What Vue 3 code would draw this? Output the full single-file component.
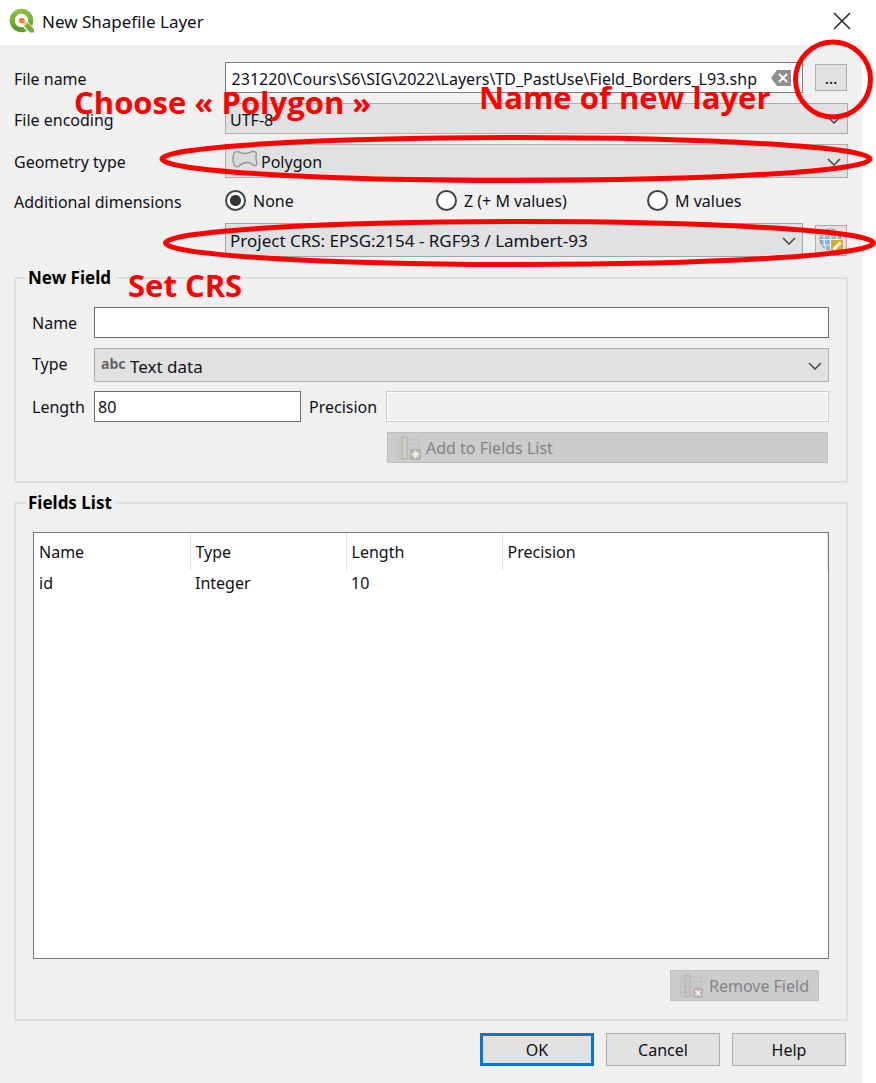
<script setup>
import { onMounted, ref } from 'vue'

const fileName = ref('231220\\Cours\\S6\\SIG\\2022\\Layers\\TD_PastUse\\Field_Borders_L93.shp')
const fileInput = ref(null)
const dimension = ref('none')
const dimensions = [
  { value: 'none', label: 'None' },
  { value: 'z', label: 'Z (+ M values)' },
  { value: 'm', label: 'M values' },
]
const fieldName = ref('')
const fieldLength = ref('80')
const fields = [{ name: 'id', type: 'Integer', length: '10', precision: '' }]

onMounted(() => {
  // Long paths show their end, where the file name is.
  fileInput.value.scrollLeft = fileInput.value.scrollWidth
})
</script>

<template>
  <div class="page">
    <header class="titlebar">
      <svg class="logo" viewBox="0 0 26 26" aria-hidden="true">
        <defs>
          <linearGradient id="ring" x1="0" y1="0" x2="0" y2="1">
            <stop offset="0" stop-color="#8fc043" />
            <stop offset="1" stop-color="#5f9a2c" />
          </linearGradient>
        </defs>
        <circle cx="12.500" cy="12.500" r="9.300" fill="none" stroke="url(#ring)" stroke-width="5" />
        <path d="M15 15 L24 24" stroke="#fff" stroke-width="7" />
        <path d="M15 18 L18.500 14.500 L25 21 V24.500 H21z" fill="#78ab35" />
        <path d="M13 11 L19 15 L15.500 18.500 L11 13z" fill="#dfcf8e" />
        <circle cx="12.700" cy="12.500" r="2.800" fill="#ef7f2c" />
      </svg>
      <h1>New Shapefile Layer</h1>
      <button class="close" type="button" aria-label="Close">
        <svg viewBox="0 0 18 18"><path d="M1 1 L17 17 M17 1 L1 17" /></svg>
      </button>
    </header>

    <form class="dialog" @submit.prevent>
      <div class="form">
        <label class="caption" for="file">File name</label>
        <div class="with-tool">
          <div class="file-box">
            <input id="file" ref="fileInput" v-model="fileName" type="text" />
            <button class="clear" type="button" aria-label="Clear">
              <svg viewBox="0 0 20 16">
                <path d="M6 0 H20 V16 H6 L0 8z" fill="#8f8f8f" />
                <path d="M8 4 L16 12 M16 4 L8 12" stroke="#fff" stroke-width="1.800" />
              </svg>
            </button>
          </div>
          <button class="tool browse" type="button">…</button>
        </div>

        <label class="caption" for="encoding">File encoding</label>
        <div class="select low">
          <select id="encoding"><option>UTF-8</option></select>
          <svg class="chevron" viewBox="0 0 14 8"><path d="M1 1 L7 7 L13 1" /></svg>
        </div>

        <label class="caption" for="geometry">Geometry type</label>
        <div class="select">
          <select id="geometry" class="has-icon"><option>Polygon</option></select>
          <svg class="lead polygon" viewBox="0 0 26 18" aria-hidden="true">
            <path
              d="M3 2 C6 0.500 8 3 12 3.500 C16 4 19 1 22 1.500 C26 2 23.500 6 24 9 C24.500 12 26 15 23 15.500 C20 16 19 12.500 16 12.500 C12 12.500 9 14 6.500 16.500 C3 18 1 14 1 10 C1 7 1 3.500 3 2z"
              fill="#dadada" stroke="#929292" stroke-width="1.300"
            />
          </svg>
          <svg class="chevron" viewBox="0 0 14 8"><path d="M1 1 L7 7 L13 1" /></svg>
        </div>

        <span id="dims" class="caption">Additional dimensions</span>
        <div class="radios" role="radiogroup" aria-labelledby="dims">
          <label v-for="d in dimensions" :key="d.value">
            <input v-model="dimension" type="radio" name="dimension" :value="d.value" />
            {{ d.label }}
          </label>
        </div>

        <span></span>
        <div class="with-tool">
          <div class="select crs wide-text">
            <select aria-label="Coordinate reference system">
              <option>Project CRS: EPSG:2154 - RGF93 / Lambert-93</option>
            </select>
            <svg class="chevron" viewBox="0 0 14 8"><path d="M1 1 L7 7 L13 1" /></svg>
          </div>
          <button class="tool" type="button" aria-label="Select CRS">
            <svg class="globe" viewBox="0 0 26 26">
              <circle cx="12.500" cy="12.500" r="10.500" fill="#86b6dc" stroke="#8b9299" />
              <path d="M2.500 10 A10.500 10.500 0 0 1 22.500 10z" fill="#b9bdc0" />
              <path
                d="M2 12.500 H23 M4 7 H21 M4 18 H21 M12.500 2 V23 M8 3 Q4 12 8 22 M17 3 Q21 12 17 22"
                fill="none" stroke="#eef3f7" stroke-width="1.200"
              />
              <rect x="13" y="13" width="12" height="12" rx="1" fill="#d9aa2b" />
              <path d="M15.500 22.500 L22.500 15.500" stroke="#fff" stroke-width="3" />
            </svg>
          </button>
        </div>
      </div>

      <fieldset class="new-field">
        <legend>New Field</legend>
        <div class="field-form">
          <label for="name">Name</label>
          <input id="name" v-model="fieldName" class="box" type="text" />
          <label for="type">Type</label>
          <div class="select wide-text">
            <select id="type" class="has-icon"><option>Text data</option></select>
            <span class="lead abc" aria-hidden="true">abc</span>
            <svg class="chevron" viewBox="0 0 14 8"><path d="M1 1 L7 7 L13 1" /></svg>
          </div>
          <label for="length">Length</label>
          <div class="sizes">
            <input id="length" v-model="fieldLength" class="box" type="text" />
            <label for="precision">Precision</label>
            <input id="precision" class="box" type="text" disabled />
            <button class="action add" type="button" disabled>
              <svg viewBox="0 0 24 24" aria-hidden="true">
                <path d="M1 3 H22 V22 H1z M1 8 H22 M1 13 H22 M1 18 H22" fill="none" stroke="#bcc0c4" />
                <rect x="5" y="1" width="5" height="22" fill="#d0cdc2" stroke="#b0aea6" />
                <rect x="13" y="13" width="11" height="11" rx="2" fill="#b3b0a4" />
                <path d="M18.500 14.500 V22.500 M14.500 18.500 H22.500 M16 16 L21 21 M21 16 L16 21" stroke="#eee" stroke-width="1.300" />
              </svg>
              Add to Fields List
            </button>
          </div>
        </div>
      </fieldset>

      <fieldset class="fields-list">
        <legend>Fields List</legend>
        <div class="table-box">
          <table>
            <thead>
              <tr><th>Name</th><th>Type</th><th>Length</th><th class="last">Precision</th></tr>
            </thead>
            <tbody>
              <tr v-for="f in fields" :key="f.name">
                <td>{{ f.name }}</td>
                <td>{{ f.type }}</td>
                <td>{{ f.length }}</td>
                <td>{{ f.precision }}</td>
              </tr>
            </tbody>
          </table>
        </div>
        <button class="action remove" type="button" disabled>
          <svg viewBox="0 0 24 24" aria-hidden="true">
            <path d="M1 3 H22 V22 H1z M1 8 H22 M1 13 H22 M1 18 H22" fill="none" stroke="#bdbdc0" />
            <rect x="5" y="1" width="5" height="22" fill="#cbc3c3" stroke="#b8aeae" />
            <rect x="13" y="14" width="10" height="10" rx="2" fill="#bdafaf" />
            <path d="M15.500 16.500 L20.500 21.500 M20.500 16.500 L15.500 21.500" stroke="#f0eeee" stroke-width="1.800" />
          </svg>
          Remove Field
        </button>
      </fieldset>

      <div class="buttons">
        <button class="ok" type="submit">OK</button>
        <button type="button">Cancel</button>
        <button type="button">Help</button>
      </div>
    </form>

    <div class="notes">
      <svg width="876" height="300" aria-hidden="true">
        <circle cx="833" cy="79.500" r="37.500" />
        <ellipse cx="516" cy="159" rx="354" ry="21.500" />
        <ellipse cx="519.500" cy="243" rx="354" ry="21.500" />
      </svg>
      <span class="note choose">Choose « Polygon »</span>
      <span class="note layer">Name of new layer</span>
      <span class="note set">Set CRS</span>
    </div>
  </div>
</template>

<style>
body {
  background: #fff;
}
</style>

<style scoped>
* {
  box-sizing: border-box;
}
.page {
  position: relative;
  min-height: 100vh;
  display: flex;
  flex-direction: column;
  overflow: hidden;
  color: #101018;
  font: 16px/24px "Noto Sans", sans-serif;
}
input,
select,
button {
  font: inherit;
  color: inherit;
  margin: 0;
  border-radius: 0;
}
.titlebar {
  height: 45px;
  padding: 0 25px 4px 9px;
  display: flex;
  align-items: center;
  gap: 7px;
}
.logo {
  width: 26px;
  height: 26px;
}
h1 {
  flex: 1;
  margin: 0;
  padding-top: 2px;
  font-size: 17px;
  font-weight: 400;
}
.close {
  display: flex;
  padding: 0;
  border: 0;
  background: none;
}
.close svg {
  width: 18px;
  height: 18px;
  fill: none;
  stroke: #222;
  stroke-width: 1.5;
}
.dialog {
  flex: 1;
  display: flex;
  flex-direction: column;
  margin-right: 14px;
  padding: 17px 14px;
  background: #f0f0f0;
}
.form {
  display: grid;
  grid-template-columns: 211px 1fr;
  align-items: center;
  row-gap: 10px;
}
.caption {
  padding-top: 2px;
  line-height: 22px;
}
.with-tool {
  display: grid;
  grid-template-columns: 1fr 32px;
  column-gap: 12px;
  align-items: center;
  padding-right: 1px;
}
.file-box {
  display: flex;
  align-items: center;
  height: 31px;
  background: #fff;
  border: 1px solid #7a7a7a;
}
.file-box input {
  flex: 1;
  min-width: 0;
  padding: 2px 0 0;
  border: 0;
  outline: 0;
  text-align: right;
  background: none;
}
.clear {
  display: flex;
  padding: 0;
  margin: 0 11px 0 14px;
  border: 0;
  background: none;
}
.clear svg {
  width: 20px;
  height: 16px;
}
.tool {
  display: flex;
  align-items: center;
  justify-content: center;
  height: 31px;
  padding: 0;
  background: #e1e1e1;
  border: 1px solid #adadad;
}
.browse {
  height: 27px;
}
.globe {
  width: 26px;
  height: 26px;
}
.select {
  position: relative;
  height: 34px;
}
.low {
  height: 31px;
}
.wide-text {
  font-size: 17px;
}
.select select {
  display: block;
  width: 100%;
  height: 100%;
  padding: 2px 36px 0 4px;
  appearance: none;
  background: #e1e1e1;
  border: 1px solid #adadad;
}
.select select.has-icon {
  padding-left: 35px;
}
.crs select {
  background: #dfe1e3;
  border-color: #9aa7b3;
}
.chevron {
  position: absolute;
  right: 7px;
  top: 50%;
  width: 14px;
  height: 8px;
  margin-top: -3px;
  fill: none;
  stroke: #444;
  stroke-width: 1.5;
}
.lead {
  position: absolute;
  left: 7px;
  pointer-events: none;
}
.polygon {
  top: 6px;
  width: 26px;
  height: 18px;
}
.abc {
  top: 4px;
  font-size: 14px;
  line-height: 24px;
  font-weight: 700;
  color: #666;
}
.radios {
  display: grid;
  grid-template-columns: 211px 211px 1fr;
  height: 25px;
}
.radios label {
  display: flex;
  align-items: center;
  gap: 7px;
}
.radios input {
  appearance: none;
  width: 21px;
  height: 21px;
  border: 2px solid #444;
  border-radius: 50%;
  background: #fff;
}
.radios input:checked {
  background: radial-gradient(circle, #333 5px, #fff 6px);
}
fieldset {
  margin: 0;
  min-width: 0;
  border: 2px solid #dfdfdf;
}
legend {
  padding: 0 4px 0 2px;
  color: #000;
  font-size: 17px;
  font-weight: 700;
}
.new-field {
  margin-top: 9px;
  padding: 17px 17px 18px 10px;
}
.field-form {
  display: grid;
  grid-template-columns: 62px 1fr;
  align-items: start;
  row-gap: 9px;
  line-height: 32px;
  padding-left: 6px;
}
.box {
  display: block;
  width: 100%;
  height: 31px;
  padding: 0 3px;
  background: #fff;
  border: 1px solid #6c6c6c;
}
.box:disabled {
  background: #f0f0f0;
  border-color: #ccc;
  box-shadow: inset 0 0 0 1px #fff;
}
.sizes {
  display: grid;
  grid-template-columns: 207px 69px 1fr;
  column-gap: 8px;
  row-gap: 9px;
}
.action {
  display: flex;
  align-items: center;
  gap: 5px;
  height: 31px;
  padding: 0 9px;
  color: #838387;
  background: #ccc;
  border: 1px solid #bfbfbf;
}
.action svg {
  width: 24px;
  height: 24px;
}
.add {
  grid-column: 3;
  margin: 0 1px;
}
.fields-list {
  flex: 1;
  display: flex;
  flex-direction: column;
  margin-top: 8px;
  padding: 17px 17px 17px 10px;
}
.table-box {
  min-height: 427px;
  margin-left: 7px;
  background: #fff;
  border: 1px solid #747984;
}
table {
  width: 100%;
  table-layout: fixed;
  border-collapse: collapse;
}
th,
td {
  padding: 0 5px;
  text-align: left;
  font-weight: 400;
}
th {
  width: 156px;
  height: 37px;
  border-right: 1px solid #e2e2e2;
}
th.last {
  width: auto;
}
td {
  height: 26px;
}
.remove {
  align-self: flex-end;
  margin: 11px 10px 0 0;
}
.buttons {
  display: flex;
  justify-content: flex-end;
  gap: 12px;
  margin-top: 12px;
  padding-right: 2px;
}
.buttons button {
  width: 114px;
  height: 33px;
  padding: 0;
  background: #e1e1e1;
  border: 1px solid #adadad;
}
.buttons .ok {
  border: 3px solid #0078d7;
}
.notes {
  position: absolute;
  inset: 0;
  pointer-events: none;
}
.notes svg {
  position: absolute;
  fill: none;
  stroke: #f00;
  stroke-width: 5;
}
.note {
  position: absolute;
  color: #f00;
  font: 700 31px/40px "Open Sans", sans-serif;
  white-space: nowrap;
}
.choose {
  left: 74px;
  top: 82px;
}
.layer {
  left: 479px;
  top: 77px;
}
.set {
  left: 128px;
  top: 265px;
}
</style>
